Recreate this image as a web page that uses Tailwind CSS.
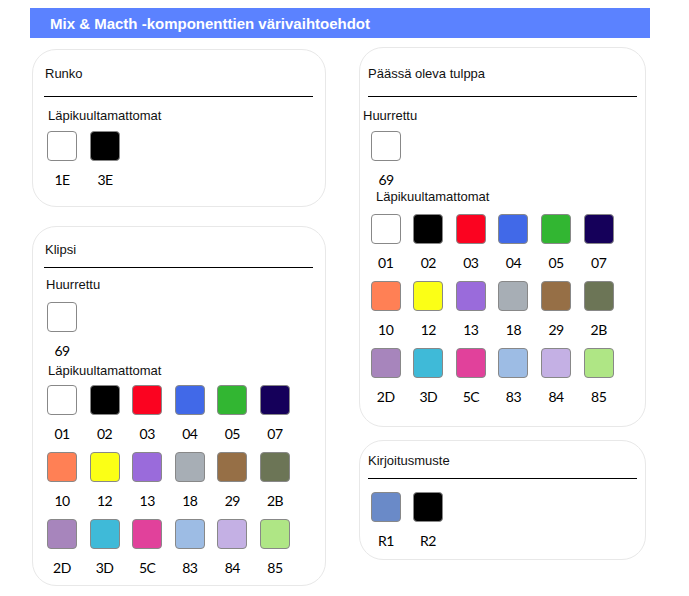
<!DOCTYPE html>
<html lang="fi">
<head>
    <meta charset="UTF-8">
    <title>Mix &amp; Macth -komponenttien värivaihtoehdot</title>
    <script src="https://cdn.jsdelivr.net/npm/@tailwindcss/browser@4"></script>
</head>
<body class="bg-white font-['Liberation_Sans',Arial,sans-serif] text-[13px] leading-[18px] text-[#111]">
    <div class="w-[689px] h-[596px] overflow-hidden pt-2">
        <h1 class="ml-[30px] w-[620px] h-[30px] bg-[#5b82ff] pl-5 text-[15px] font-bold leading-[31px] text-white">Mix &amp; Macth -komponenttien värivaihtoehdot</h1>

        <div class="flex items-start">
            <!-- vasen palsta -->
            <div class="ml-8 mt-[11px] w-[294px] flex flex-col gap-[19px]">
                <section class="h-[158px] rounded-[24px] border border-[#e8e8e8] bg-white">
                    <h2 class="ml-[11px] mr-3 h-[47px] border-b border-black pl-px pt-[15px]">Runko</h2>
                    <p class="ml-[15px] mt-[10px]">Läpikuultamattomat</p>
                    <div class="ml-[14px] mt-[6px] flex">
                        <div class="w-[43px]">
                            <div class="w-[30px] h-[30px] rounded-[4px] border border-[#888] bg-white"></div>
                            <p class="w-[30px] mt-[9px] text-center font-['Lato',sans-serif] text-[14px] leading-5 tracking-[-0.5px] text-black">1E</p>
                        </div>
                        <div class="w-[43px]">
                            <div class="w-[30px] h-[30px] rounded-[4px] border border-[#888] bg-black"></div>
                            <p class="w-[30px] mt-[9px] text-center font-['Lato',sans-serif] text-[14px] leading-5 tracking-[-0.5px] text-black">3E</p>
                        </div>
                    </div>
                </section>

                <section class="h-[360px] rounded-[24px] border border-[#e8e8e8] bg-white">
                    <h2 class="ml-[11px] mr-3 h-[41px] border-b border-black pl-px pt-[14px]">Klipsi</h2>
                    <p class="ml-[13px] mt-2">Huurrettu</p>
                    <div class="ml-[14px] mt-2 w-[30px] h-[30px] rounded-[4px] border border-[#888] bg-white"></div>
                    <p class="ml-[14px] mt-[9px] w-[30px] text-center font-['Lato',sans-serif] text-[14px] leading-5 tracking-[-0.5px] text-black">69</p>
                    <p class="ml-[15px] mt-px">Läpikuultamattomat</p>
                    <div class="ml-[14px] mt-[5px] grid grid-cols-[repeat(6,42.6px)] grid-rows-[repeat(3,67px)] justify-items-start">
                        <div><div class="w-[30px] h-[30px] rounded-[4px] border border-[#888] bg-white"></div><p class="w-[30px] mt-[9px] text-center font-['Lato',sans-serif] text-[14px] leading-5 tracking-[-0.5px] text-black">01</p></div>
                        <div><div class="w-[30px] h-[30px] rounded-[4px] border border-[#888] bg-black"></div><p class="w-[30px] mt-[9px] text-center font-['Lato',sans-serif] text-[14px] leading-5 tracking-[-0.5px] text-black">02</p></div>
                        <div><div class="w-[30px] h-[30px] rounded-[4px] border border-[#888] bg-[#fb0320]"></div><p class="w-[30px] mt-[9px] text-center font-['Lato',sans-serif] text-[14px] leading-5 tracking-[-0.5px] text-black">03</p></div>
                        <div><div class="w-[30px] h-[30px] rounded-[4px] border border-[#888] bg-[#4169e8]"></div><p class="w-[30px] mt-[9px] text-center font-['Lato',sans-serif] text-[14px] leading-5 tracking-[-0.5px] text-black">04</p></div>
                        <div><div class="w-[30px] h-[30px] rounded-[4px] border border-[#888] bg-[#32b632]"></div><p class="w-[30px] mt-[9px] text-center font-['Lato',sans-serif] text-[14px] leading-5 tracking-[-0.5px] text-black">05</p></div>
                        <div><div class="w-[30px] h-[30px] rounded-[4px] border border-[#888] bg-[#15005a]"></div><p class="w-[30px] mt-[9px] text-center font-['Lato',sans-serif] text-[14px] leading-5 tracking-[-0.5px] text-black">07</p></div>
                        <div><div class="w-[30px] h-[30px] rounded-[4px] border border-[#888] bg-[#ff8055]"></div><p class="w-[30px] mt-[9px] text-center font-['Lato',sans-serif] text-[14px] leading-5 tracking-[-0.5px] text-black">10</p></div>
                        <div><div class="w-[30px] h-[30px] rounded-[4px] border border-[#888] bg-[#fbff16]"></div><p class="w-[30px] mt-[9px] text-center font-['Lato',sans-serif] text-[14px] leading-5 tracking-[-0.5px] text-black">12</p></div>
                        <div><div class="w-[30px] h-[30px] rounded-[4px] border border-[#888] bg-[#9a6bdb]"></div><p class="w-[30px] mt-[9px] text-center font-['Lato',sans-serif] text-[14px] leading-5 tracking-[-0.5px] text-black">13</p></div>
                        <div><div class="w-[30px] h-[30px] rounded-[4px] border border-[#888] bg-[#a7aeb5]"></div><p class="w-[30px] mt-[9px] text-center font-['Lato',sans-serif] text-[14px] leading-5 tracking-[-0.5px] text-black">18</p></div>
                        <div><div class="w-[30px] h-[30px] rounded-[4px] border border-[#888] bg-[#966f46]"></div><p class="w-[30px] mt-[9px] text-center font-['Lato',sans-serif] text-[14px] leading-5 tracking-[-0.5px] text-black">29</p></div>
                        <div><div class="w-[30px] h-[30px] rounded-[4px] border border-[#888] bg-[#6c7556]"></div><p class="w-[30px] mt-[9px] text-center font-['Lato',sans-serif] text-[14px] leading-5 tracking-[-0.5px] text-black">2B</p></div>
                        <div><div class="w-[30px] h-[30px] rounded-[4px] border border-[#888] bg-[#a785bc]"></div><p class="w-[30px] mt-[9px] text-center font-['Lato',sans-serif] text-[14px] leading-5 tracking-[-0.5px] text-black">2D</p></div>
                        <div><div class="w-[30px] h-[30px] rounded-[4px] border border-[#888] bg-[#3fbad8]"></div><p class="w-[30px] mt-[9px] text-center font-['Lato',sans-serif] text-[14px] leading-5 tracking-[-0.5px] text-black">3D</p></div>
                        <div><div class="w-[30px] h-[30px] rounded-[4px] border border-[#888] bg-[#e1419b]"></div><p class="w-[30px] mt-[9px] text-center font-['Lato',sans-serif] text-[14px] leading-5 tracking-[-0.5px] text-black">5C</p></div>
                        <div><div class="w-[30px] h-[30px] rounded-[4px] border border-[#888] bg-[#9dbce4]"></div><p class="w-[30px] mt-[9px] text-center font-['Lato',sans-serif] text-[14px] leading-5 tracking-[-0.5px] text-black">83</p></div>
                        <div><div class="w-[30px] h-[30px] rounded-[4px] border border-[#888] bg-[#c4b0e4]"></div><p class="w-[30px] mt-[9px] text-center font-['Lato',sans-serif] text-[14px] leading-5 tracking-[-0.5px] text-black">84</p></div>
                        <div><div class="w-[30px] h-[30px] rounded-[4px] border border-[#888] bg-[#afe685]"></div><p class="w-[30px] mt-[9px] text-center font-['Lato',sans-serif] text-[14px] leading-5 tracking-[-0.5px] text-black">85</p></div>
                    </div>
                </section>
            </div>

            <!-- oikea palsta -->
            <div class="ml-[33px] mt-[9px] w-[287px] flex flex-col gap-[13px]">
                <section class="h-[380px] rounded-[24px] border border-[#e8e8e8] bg-white">
                    <h2 class="ml-[8px] mr-2 h-[49px] border-b border-black pt-[17px]">Päässä oleva tulppa</h2>
                    <p class="ml-[3px] mt-[10px]">Huurrettu</p>
                    <div class="ml-[11px] mt-[6px] w-[30px] h-[30px] rounded-[4px] border border-[#888] bg-white"></div>
                    <p class="ml-[11px] mt-[9px] w-[30px] text-center font-['Lato',sans-serif] text-[14px] leading-5 tracking-[-0.5px] text-black">69</p>
                    <p class="ml-4 -mt-[2px]">Läpikuultamattomat</p>
                    <div class="ml-[10.7px] mt-2 grid grid-cols-[repeat(6,42.6px)] grid-rows-[repeat(3,67px)] justify-items-start">
                        <div><div class="w-[30px] h-[30px] rounded-[4px] border border-[#888] bg-white"></div><p class="w-[30px] mt-[9px] text-center font-['Lato',sans-serif] text-[14px] leading-5 tracking-[-0.5px] text-black">01</p></div>
                        <div><div class="w-[30px] h-[30px] rounded-[4px] border border-[#888] bg-black"></div><p class="w-[30px] mt-[9px] text-center font-['Lato',sans-serif] text-[14px] leading-5 tracking-[-0.5px] text-black">02</p></div>
                        <div><div class="w-[30px] h-[30px] rounded-[4px] border border-[#888] bg-[#fb0320]"></div><p class="w-[30px] mt-[9px] text-center font-['Lato',sans-serif] text-[14px] leading-5 tracking-[-0.5px] text-black">03</p></div>
                        <div><div class="w-[30px] h-[30px] rounded-[4px] border border-[#888] bg-[#4169e8]"></div><p class="w-[30px] mt-[9px] text-center font-['Lato',sans-serif] text-[14px] leading-5 tracking-[-0.5px] text-black">04</p></div>
                        <div><div class="w-[30px] h-[30px] rounded-[4px] border border-[#888] bg-[#32b632]"></div><p class="w-[30px] mt-[9px] text-center font-['Lato',sans-serif] text-[14px] leading-5 tracking-[-0.5px] text-black">05</p></div>
                        <div><div class="w-[30px] h-[30px] rounded-[4px] border border-[#888] bg-[#15005a]"></div><p class="w-[30px] mt-[9px] text-center font-['Lato',sans-serif] text-[14px] leading-5 tracking-[-0.5px] text-black">07</p></div>
                        <div><div class="w-[30px] h-[30px] rounded-[4px] border border-[#888] bg-[#ff8055]"></div><p class="w-[30px] mt-[9px] text-center font-['Lato',sans-serif] text-[14px] leading-5 tracking-[-0.5px] text-black">10</p></div>
                        <div><div class="w-[30px] h-[30px] rounded-[4px] border border-[#888] bg-[#fbff16]"></div><p class="w-[30px] mt-[9px] text-center font-['Lato',sans-serif] text-[14px] leading-5 tracking-[-0.5px] text-black">12</p></div>
                        <div><div class="w-[30px] h-[30px] rounded-[4px] border border-[#888] bg-[#9a6bdb]"></div><p class="w-[30px] mt-[9px] text-center font-['Lato',sans-serif] text-[14px] leading-5 tracking-[-0.5px] text-black">13</p></div>
                        <div><div class="w-[30px] h-[30px] rounded-[4px] border border-[#888] bg-[#a7aeb5]"></div><p class="w-[30px] mt-[9px] text-center font-['Lato',sans-serif] text-[14px] leading-5 tracking-[-0.5px] text-black">18</p></div>
                        <div><div class="w-[30px] h-[30px] rounded-[4px] border border-[#888] bg-[#966f46]"></div><p class="w-[30px] mt-[9px] text-center font-['Lato',sans-serif] text-[14px] leading-5 tracking-[-0.5px] text-black">29</p></div>
                        <div><div class="w-[30px] h-[30px] rounded-[4px] border border-[#888] bg-[#6c7556]"></div><p class="w-[30px] mt-[9px] text-center font-['Lato',sans-serif] text-[14px] leading-5 tracking-[-0.5px] text-black">2B</p></div>
                        <div><div class="w-[30px] h-[30px] rounded-[4px] border border-[#888] bg-[#a785bc]"></div><p class="w-[30px] mt-[9px] text-center font-['Lato',sans-serif] text-[14px] leading-5 tracking-[-0.5px] text-black">2D</p></div>
                        <div><div class="w-[30px] h-[30px] rounded-[4px] border border-[#888] bg-[#3fbad8]"></div><p class="w-[30px] mt-[9px] text-center font-['Lato',sans-serif] text-[14px] leading-5 tracking-[-0.5px] text-black">3D</p></div>
                        <div><div class="w-[30px] h-[30px] rounded-[4px] border border-[#888] bg-[#e1419b]"></div><p class="w-[30px] mt-[9px] text-center font-['Lato',sans-serif] text-[14px] leading-5 tracking-[-0.5px] text-black">5C</p></div>
                        <div><div class="w-[30px] h-[30px] rounded-[4px] border border-[#888] bg-[#9dbce4]"></div><p class="w-[30px] mt-[9px] text-center font-['Lato',sans-serif] text-[14px] leading-5 tracking-[-0.5px] text-black">83</p></div>
                        <div><div class="w-[30px] h-[30px] rounded-[4px] border border-[#888] bg-[#c4b0e4]"></div><p class="w-[30px] mt-[9px] text-center font-['Lato',sans-serif] text-[14px] leading-5 tracking-[-0.5px] text-black">84</p></div>
                        <div><div class="w-[30px] h-[30px] rounded-[4px] border border-[#888] bg-[#afe685]"></div><p class="w-[30px] mt-[9px] text-center font-['Lato',sans-serif] text-[14px] leading-5 tracking-[-0.5px] text-black">85</p></div>
                    </div>
                </section>

                <section class="h-[120px] rounded-[24px] border border-[#e8e8e8] bg-white">
                    <h2 class="ml-[8px] mr-2 h-[38px] border-b border-black pt-[11px]">Kirjoitusmuste</h2>
                    <div class="ml-[11px] mt-[13px] flex">
                        <div class="w-[42px]">
                            <div class="w-[30px] h-[30px] rounded-[4px] border border-[#888] bg-[#6a8ac8]"></div>
                            <p class="w-[30px] mt-[9px] text-center font-['Lato',sans-serif] text-[14px] leading-5 tracking-[-0.5px] text-black">R1</p>
                        </div>
                        <div class="w-[42px]">
                            <div class="w-[30px] h-[30px] rounded-[4px] border border-[#888] bg-black"></div>
                            <p class="w-[30px] mt-[9px] text-center font-['Lato',sans-serif] text-[14px] leading-5 tracking-[-0.5px] text-black">R2</p>
                        </div>
                    </div>
                </section>
            </div>
        </div>
    </div>
</body>
</html>
